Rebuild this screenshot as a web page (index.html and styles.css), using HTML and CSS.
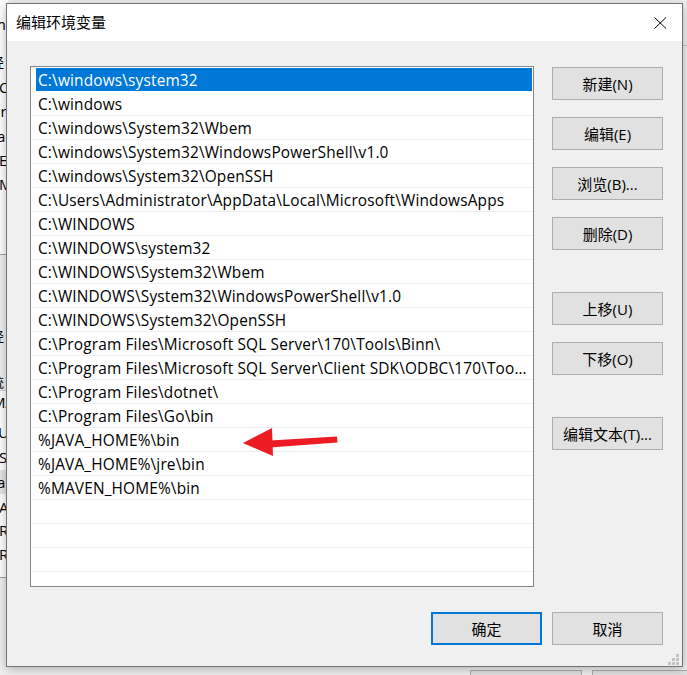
FILE: index.html
```html
<!DOCTYPE html>
<html lang="zh-CN">
<head>
<meta charset="utf-8">
<title>编辑环境变量</title>
<link rel="stylesheet" href="styles.css">
</head>
<body>
<div class="desk">
  <div class="bgleft">
    <span class="frag f1">m</span>
    <span class="frag f2">经</span>
    <span class="frag f3">C</span>
    <span class="frag f4">er</span>
    <span class="frag f5">a</span>
    <span class="frag f6">E</span>
    <span class="frag f7">M</span>
    <div class="bgline l1"></div>
    <div class="bggrey g1"></div>
    <span class="frag f8">经</span>
    <span class="frag f9">统</span>
    <span class="frag f10">MA</span>
    <span class="frag f11">U</span>
    <span class="frag f12">S</span>
    <div class="bggrey g2"></div>
    <span class="frag f13">a</span>
    <span class="frag f14">A</span>
    <span class="frag f15">R</span>
    <span class="frag f16">R</span>
    <div class="bggrey g3"></div>
  </div>
  <div class="bgright"></div>
  <div class="bgbtn bb1"></div>
  <div class="bgbtn bb2"></div>

  <div class="dialog">
    <div class="titlebar">
      <span class="title">编辑环境变量</span>
      <span class="close">
        <svg width="13" height="12" viewBox="0 0 13 12"><path d="M0.5 0.5 L12 11.5 M12 0.5 L0.5 11.5" stroke="#000" stroke-width="1" fill="none"/></svg>
      </span>
    </div>
    <div class="body">
      <div class="main">
        <div class="list">
          <div class="row sel">C:\windows\system32</div>
          <div class="row">C:\windows</div>
          <div class="row">C:\windows\System32\Wbem</div>
          <div class="row">C:\windows\System32\WindowsPowerShell\v1.0</div>
          <div class="row">C:\windows\System32\OpenSSH</div>
          <div class="row">C:\Users\Administrator\AppData\Local\Microsoft\WindowsApps</div>
          <div class="row">C:\WINDOWS</div>
          <div class="row">C:\WINDOWS\system32</div>
          <div class="row">C:\WINDOWS\System32\Wbem</div>
          <div class="row">C:\WINDOWS\System32\WindowsPowerShell\v1.0</div>
          <div class="row">C:\WINDOWS\System32\OpenSSH</div>
          <div class="row">C:\Program Files\Microsoft SQL Server\170\Tools\Binn\</div>
          <div class="row">C:\Program Files\Microsoft SQL Server\Client SDK\ODBC\170\Tools\Binn\</div>
          <div class="row">C:\Program Files\dotnet\</div>
          <div class="row">C:\Program Files\Go\bin</div>
          <div class="row">%JAVA_HOME%\bin</div>
          <div class="row">%JAVA_HOME%\jre\bin</div>
          <div class="row">%MAVEN_HOME%\bin</div>
          <div class="row"></div>
          <div class="row"></div>
          <div class="row"></div>
          <div class="row"></div>
          <div class="row"></div>
        </div>
        <div class="side">
          <button class="btn">新建(N)</button>
          <button class="btn">编辑(E)</button>
          <button class="btn">浏览(B)...</button>
          <button class="btn">删除(D)</button>
          <button class="btn big-gap">上移(U)</button>
          <button class="btn">下移(O)</button>
          <button class="btn big-gap">编辑文本(T)...</button>
        </div>
      </div>
      <div class="footer">
        <button class="btn primary">确定</button>
        <button class="btn">取消</button>
      </div>
    </div>
    <div class="grip">
      <svg width="11" height="11" viewBox="0 0 11 11" fill="#c2c2c2">
        <rect x="8" y="0" width="3" height="3"/>
        <rect x="4" y="4" width="3" height="3"/><rect x="8" y="4" width="3" height="3"/>
        <rect x="0" y="8" width="3" height="3"/><rect x="4" y="8" width="3" height="3"/><rect x="8" y="8" width="3" height="3"/>
      </svg>
    </div>
  </div>

  <svg class="arrow" width="100" height="36" viewBox="0 0 100 36">
    <polygon points="3,19 32,4 33,32" fill="#ed1c24"/>
    <polygon points="30,16.5 97,12.5 97.5,18.5 30,23.5" fill="#ed1c24"/>
  </svg>
</div>
</body>
</html>
```

FILE: styles.css
```css
html, body {
  margin: 0;
  padding: 0;
}
body {
  width: 687px;
  height: 675px;
  overflow: hidden;
  background: #f0f0f0;
  font-family: "Open Sans", "Noto Sans CJK SC", sans-serif;
  font-size: 15px;
  color: #000;
}
.desk {
  position: relative;
  width: 687px;
  height: 675px;
  overflow: hidden;
  background: #f0f0f0;
}

/* background window fragments */
.bgleft {
  position: absolute;
  left: 0;
  top: 0;
  width: 8px;
  height: 667px;
  background: #fff;
  overflow: hidden;
}
.frag {
  position: absolute;
  left: -4px;
  line-height: 20px;
  white-space: nowrap;
}
.f1 { top: 14px; left: -8px; }
.f2 { top: 52px; left: -9px; font-size: 13px; }
.f3 { top: 77px; left: -1px; }
.f4 { top: 101px; left: -8px; }
.f5 { top: 126px; left: -3px; }
.f6 { top: 150px; left: -1px; }
.f7 { top: 174px; left: -1px; }
.bgline {
  position: absolute;
  left: 0;
  width: 8px;
  height: 1px;
  background: #a0a0a0;
}
.l1 { top: 254px; }
.bggrey {
  position: absolute;
  left: 0;
  width: 8px;
  background: #f0f0f0;
}
.g1 { top: 255px; height: 135px; border-bottom: 1px solid #d0d0d0; }
.f8 { top: 326px; left: -9px; font-size: 13px; z-index: 1; }
.f9 { top: 372px; left: -9px; font-size: 13px; z-index: 1; }
.f10 { top: 392px; left: -8px; }
.f11 { top: 422px; left: -2px; }
.f12 { top: 447px; left: -1px; }
.g2 { top: 470px; height: 24px; background: #e5e5e5; }
.f13 { top: 472px; left: -3px; z-index: 1; }
.f14 { top: 497px; left: -1px; }
.f15 { top: 520px; left: -1px; }
.f16 { top: 544px; left: -1px; }
.g3 { top: 577px; height: 90px; border-top: 1px solid #a0a0a0; }

.bgright {
  position: absolute;
  left: 683px;
  top: 45px;
  width: 4px;
  height: 1px;
  background: #c8c8c8;
}
.bgbtn {
  position: absolute;
  top: 670px;
  height: 12px;
  box-sizing: border-box;
  border: 1px solid #adadad;
  background: #e1e1e1;
}
.bb1 { left: 470px; width: 112px; }
.bb2 { left: 592px; width: 100px; }

/* dialog */
.dialog {
  position: absolute;
  left: 6px;
  top: 3px;
  width: 677px;
  height: 664px;
  box-sizing: border-box;
  border: 1px solid #737373;
  background: #f0f0f0;
  box-shadow: 0 2px 10px rgba(0, 0, 0, 0.28);
  display: flex;
  flex-direction: column;
}
.titlebar {
  height: 37px;
  flex: none;
  background: #fff;
  display: flex;
  align-items: center;
  padding-left: 9px;
}
.title {
  font-size: 15px;
  line-height: 20px;
  margin-top: -2px;
}
.close {
  margin-left: auto;
  margin-right: 15px;
  width: 13px;
  height: 12px;
  margin-top: 0px;
  display: block;
}
.close svg { display: block; }

.body {
  flex: 1;
  padding: 25px 19px 0 23px;
  display: flex;
  flex-direction: column;
}
.main {
  display: flex;
  justify-content: space-between;
}
.list {
  width: 504px;
  height: 521px;
  box-sizing: border-box;
  border: 1px solid #828790;
  background: #fff;
  padding: 1px;
  overflow: hidden;
}
.row {
  height: 22px;
  padding-top: 1px;
  line-height: 23px;
  font-size: 15.4px;
  letter-spacing: 0.17px;
  border-bottom: 1px solid #ededed;
  padding-left: 6px;
  padding-right: 3px;
  white-space: nowrap;
  overflow: hidden;
  text-overflow: ellipsis;
}
.row.sel {
  color: #fff;
  background: linear-gradient(#0078d7, #0078d7) 4px 0 / calc(100% - 4px) 100% no-repeat;
  border-bottom-color: #fff;
}

.side {
  display: flex;
  flex-direction: column;
  gap: 17px;
  padding-top: 1px;
}
.btn {
  width: 111px;
  height: 33px;
  box-sizing: border-box;
  border: 1px solid #adadad;
  background: #e1e1e1;
  font-family: inherit;
  font-size: 15px;
  color: #000;
  padding: 0;
  margin: 0;
  line-height: 20px;
}
.big-gap { margin-top: 25px; }
.footer {
  display: flex;
  justify-content: flex-end;
  gap: 10px;
  margin-top: 25px;
}
.btn.primary {
  border: 2px solid #0078d7;
}
.grip {
  position: absolute;
  right: 3px;
  bottom: 1px;
  width: 11px;
  height: 11px;
}
.grip svg { display: block; }

.arrow {
  position: absolute;
  left: 240px;
  top: 424px;
  pointer-events: none;
}
```
